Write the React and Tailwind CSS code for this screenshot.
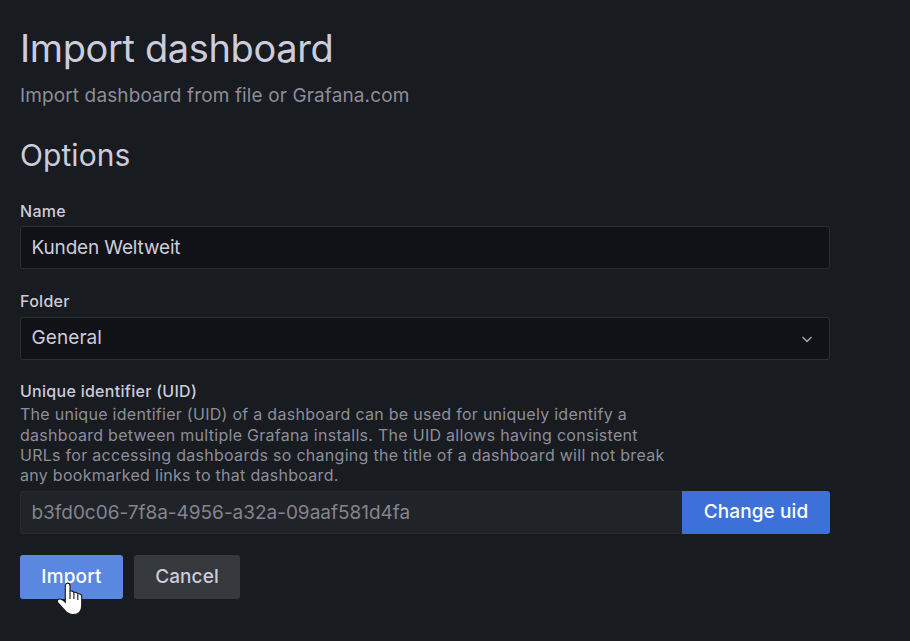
import React from "react";

function Label({ children }) {
  return <div className="text-[16px] leading-[20px] font-medium tracking-[0.28px]">{children}</div>;
}

function PointerCursor() {
  return (
    <svg className="absolute left-[36px] top-[27.5px]" width="27" height="34" viewBox="0 0 27 34">
      <path
        d="M9.300 3.800c0-3.500 4.700-3.500 4.700 0v5.400c1.400-.5 3.500-.1 3.900 1.300 1.500-.5 3.500 0 3.900 1.300 1.700-.3 3.900.4 3.900 2.600v8.800c0 5.600-3.200 9.400-8.700 9.400-4.100 0-6.400-1.800-8.600-4.700L2 20.800c-1.600-2.600.4-4.500 3-3.600 1.600.6 2.900 1.600 4.300 3z"
        fill="#ffffff"
        stroke="#15171c"
        strokeWidth="1.1"
      />
      <path d="M14 9.500v7.500M17.900 10.800v6.200M21.800 12.200v5.800" stroke="#15171c" strokeWidth="1.100" fill="none" />
    </svg>
  );
}

export default function App() {
  return (
    <main className="h-[641px] w-[910px] overflow-hidden bg-[#181b1f] px-5 pt-[24px] font-[Inter,sans-serif] text-[#ccccdc]">
      <h1 className="text-[38px] leading-[48px] font-normal tracking-[-0.38px] whitespace-nowrap">Import dashboard</h1>
      <p className="mt-[11px] text-[19px] leading-[26px] tracking-[0.12px] text-[#8d8e9a]">
        Import dashboard from file or Grafana.com
      </p>
      <h2 className="mt-[28px] text-[30px] leading-[36px] font-normal tracking-[0.08px]">Options</h2>

      <form className="w-[810px]" onSubmit={(e) => e.preventDefault()}>
        <div className="mt-[28px]">
          <Label>Name</Label>
          <div className="mt-[5px] flex h-[43px] items-center rounded-[3px] border border-[#2c2e33] bg-[#111217] px-[10.500px] pt-[2px] text-[19px] tracking-[-0.15px]">
            Kunden Weltweit
          </div>
        </div>

        <div className="mt-[22px]">
          <Label>Folder</Label>
          <div className="mt-[6px] flex h-[43px] items-center justify-between rounded-[3px] border border-[#2c2e33] bg-[#111217] pr-[16px] pl-[10.500px] text-[19px]">
            <span className="tracking-[0.08px]">General</span>
            <svg width="12" height="8" viewBox="0 0 12 8" fill="none">
              <path d="M2 2.500l4 3.800 4-3.800" stroke="#9a9ba8" strokeWidth="1.700" strokeLinecap="round" strokeLinejoin="round" />
            </svg>
          </div>
        </div>

        <div className="mt-[21px]">
          <Label>Unique identifier (UID)</Label>
          <p className="mt-[3.400px] w-[660px] text-[16px] leading-[20.300px] tracking-[0.28px] text-[#8d8e9a]">
            The unique identifier (UID) of a dashboard can be used for uniquely identify a<br />
            dashboard between multiple Grafana installs. The UID allows having consistent<br />
            URLs for accessing dashboards so changing the title of a dashboard will not break<br />
            any bookmarked links to that dashboard.
          </p>
          <div className="mt-[5.400px] flex h-[43px]">
            <div className="flex flex-1 items-center rounded-l-[3px] border border-r-0 border-[#26292d] bg-[#202327] px-[10.500px] pt-[2px] text-[19px] tracking-[-0.02px] text-[#83848f]">
              b3fd0c06-7f8a-4956-a32a-09aaf581d4fa
            </div>
            <button className="w-[148px] rounded-r-[3px] bg-[#3d71d9] text-[19px] font-medium tracking-[0.12px] text-white">
              Change uid
            </button>
          </div>
        </div>

        <div className="mt-[21px] flex gap-[11px]">
          <div className="relative">
            <button className="h-[44px] w-[103px] rounded-[3px] bg-[#5a87df] text-[19px] font-medium tracking-[0.14px] text-white">
              Import
            </button>
            <PointerCursor />
          </div>
          <button className="h-[44px] w-[106px] rounded-[3px] bg-[#35383c] text-[19px] font-medium tracking-[0.1px]">Cancel</button>
        </div>
      </form>
    </main>
  );
}
